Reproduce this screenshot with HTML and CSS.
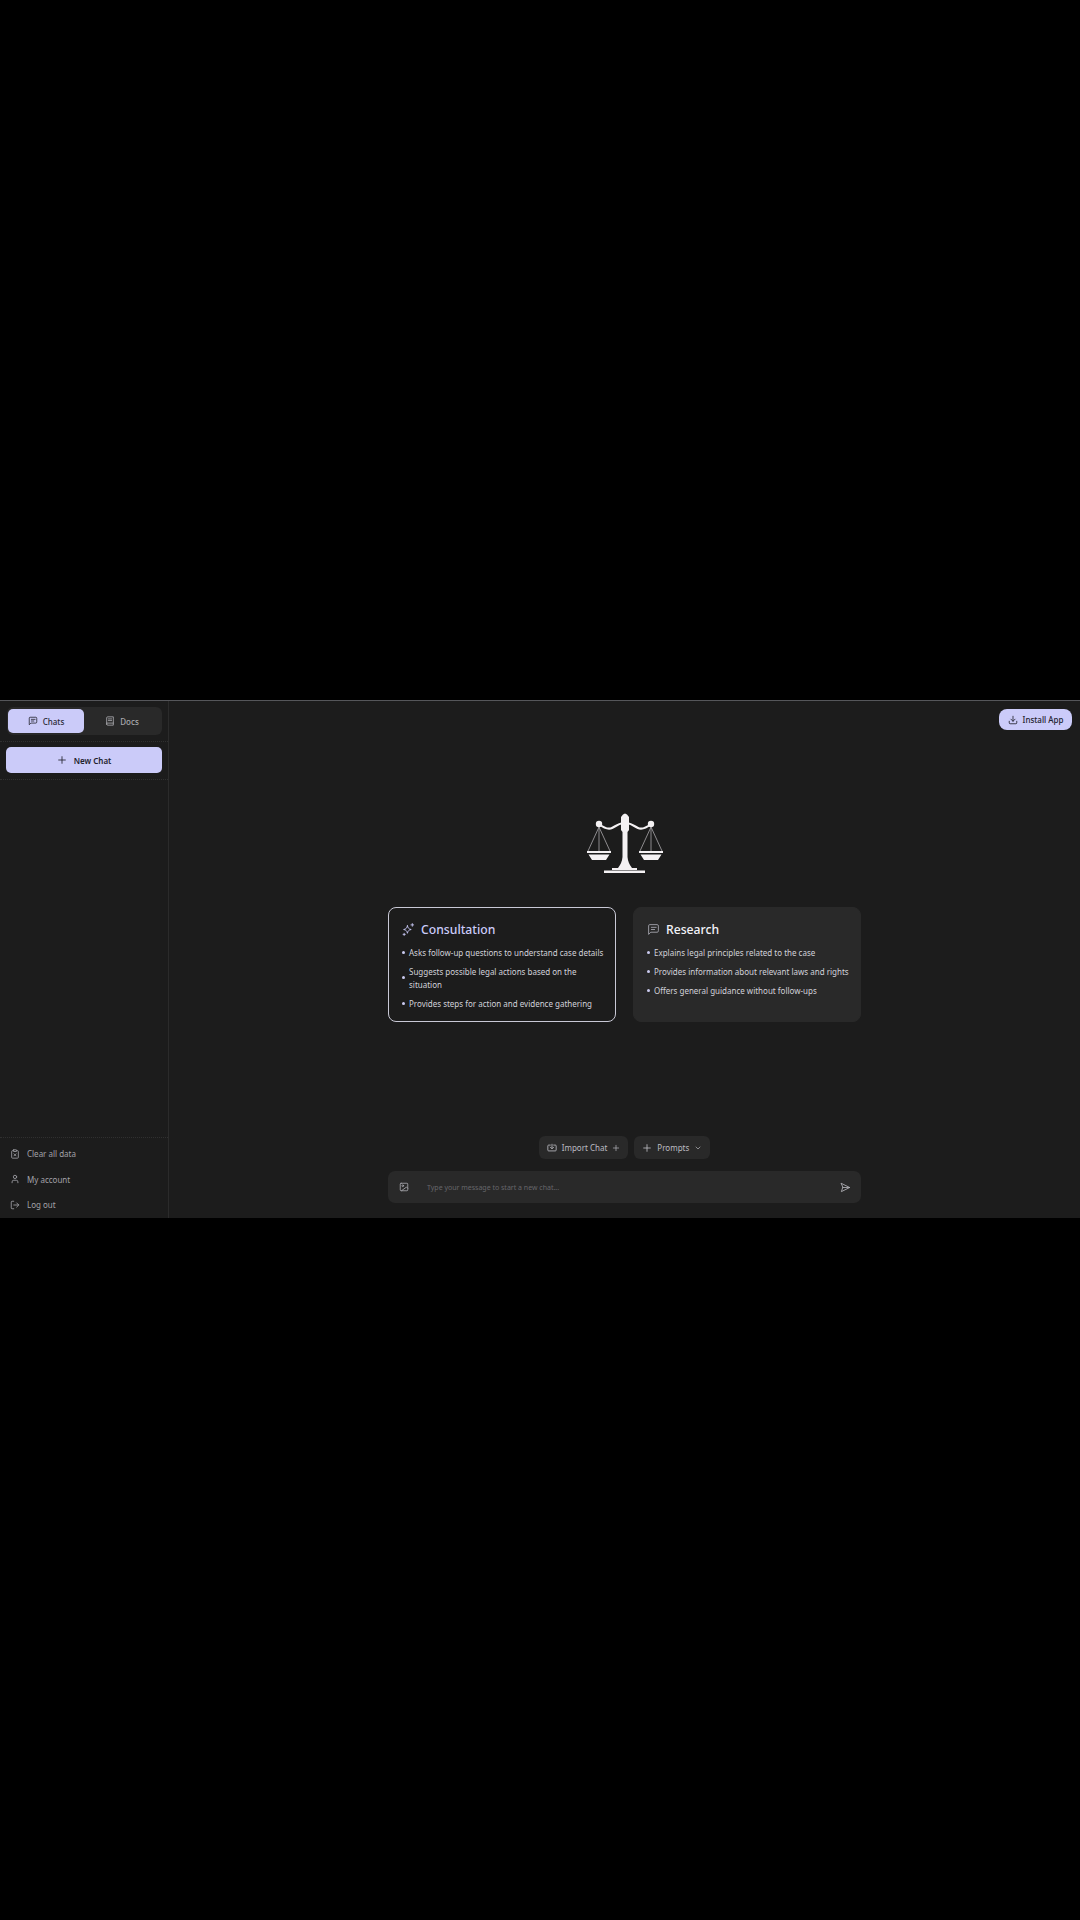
FILE: index.html
```html
<!DOCTYPE html>
<html>
<head>
    <title>Legal Assistant</title>
    <link rel="stylesheet" href="styles.css">
</head>
<body>
    <div class="app">
        <aside class="sidebar">
            <div class="tabs-wrap">
                <div class="tabs">
                    <div class="tab active">
                        <svg class="icon" viewBox="0 0 24 24"><path d="M21 15a2 2 0 0 1-2 2H7l-4 4V5a2 2 0 0 1 2-2h14a2 2 0 0 1 2 2z"/><path d="M8 8h9M8 12h6"/></svg>
                        <span>Chats</span>
                    </div>
                    <div class="tab">
                        <svg class="icon" viewBox="0 0 24 24"><path d="M4 19.5v-15A2.5 2.5 0 0 1 6.5 2H20v20H6.5a2.5 2.500 0 0 1-2.500-2.500z"/><path d="M4 17h16M8 7h8M8 11h8"/></svg>
                        <span>Docs</span>
                    </div>
                </div>
            </div>
            <div class="new-wrap">
                <button class="new-chat">
                    <svg class="icon" viewBox="0 0 24 24"><path d="M4 12h16M12 4v16"/></svg>
                    <span>New Chat</span>
                </button>
            </div>
            <div class="spacer"></div>
            <div class="side-foot">
                <div class="foot-row">
                    <svg class="icon" viewBox="0 0 24 24"><rect x="8" y="2" width="8" height="4" rx="1"/><path d="M16 4h2a2 2 0 0 1 2 2v14a2 2 0 0 1-2 2H6a2 2 0 0 1-2-2V6a2 2 0 0 1 2-2h2"/><path d="m9.5 11.5 5 5M14.5 11.5l-5 5"/></svg>
                    <span>Clear all data</span>
                </div>
                <div class="foot-row">
                    <svg class="icon" viewBox="0 0 24 24"><path d="M19 21v-2a4 4 0 0 0-4-4H9a4 4 0 0 0-4 4v2"/><circle cx="12" cy="7" r="4"/></svg>
                    <span>My account</span>
                </div>
                <div class="foot-row">
                    <svg class="icon" viewBox="0 0 24 24"><path d="M9 21H5a2 2 0 0 1-2-2V5a2 2 0 0 1 2-2h4"/><path d="m16 17 5-5-5-5M21 12H9"/></svg>
                    <span>Log out</span>
                </div>
            </div>
        </aside>

        <main class="main">
            <div class="top-bar">
                <button class="install">
                    <svg class="icon" viewBox="0 0 24 24"><path d="M21 15v4a2 2 0 0 1-2 2H5a2 2 0 0 1-2-2v-4"/><path d="m7 10 5 5 5-5M12 15V3"/></svg>
                    <span>Install App</span>
                </button>
            </div>

            <div class="logo">
                <svg viewBox="0 0 76 60" width="76" height="60">
                    <!-- beam -->
                    <path class="scale-beam" d="M12 11 C17 15 21 17 25 15 C29 13 31 11 36 10 M40 10 C45 11 47 13 51 15 C55 17 59 15 64 11"/>
                    <circle class="scale-fill" cx="12" cy="11" r="3.200"/>
                    <circle class="scale-fill" cx="64" cy="11" r="3.200"/>
                    <!-- pillar -->
                    <path class="scale-fill" d="M34 4 Q38 -3 42 4 L42 17 L40.500 19 L40.500 44 Q41 50 45 55 L31 55 Q35 50 35.500 44 L35.500 19 L34 17 Z"/>
                    <rect class="scale-fill" x="25" y="55" width="25" height="2"/>
                    <rect class="scale-fill" x="17" y="57.500" width="41" height="2.500"/>
                    <!-- pans -->
                    <path class="scale-line" d="M12 14 L1 38 M12 14 L23 38 M12 14 V38"/>
                    <path class="scale-line" d="M64 14 L53 38 M64 14 L75 38 M64 14 V38"/>
                    <path class="scale-fill" d="M0 38 H24 V40 H0 Z M1.500 41.500 H22.500 L19 47 H5 Z"/>
                    <path class="scale-fill" d="M52 38 H76 V40 H52 Z M53.500 41.500 H74.500 L71 47 H57 Z"/>
                </svg>
            </div>

            <div class="cards">
                <div class="card selected">
                    <div class="card-head">
                        <svg class="icon" viewBox="0 0 24 24"><path d="M10 5c.8 4.400 2.600 6.200 7 7-4.400.8-6.200 2.600-7 7-.8-4.400-2.600-6.200-7-7 4.400-.8 6.200-2.600 7-7z"/><path d="M19 1v5M16.500 3.500h5M4 19v4M2 21h4"/></svg>
                        <span>Consultation</span>
                    </div>
                    <ul class="points">
                        <li>Asks follow-up questions to understand case details</li>
                        <li>Suggests possible legal actions based on the situation</li>
                        <li>Provides steps for action and evidence gathering</li>
                    </ul>
                </div>
                <div class="card">
                    <div class="card-head">
                        <svg class="icon" viewBox="0 0 24 24"><path d="M21 15a2 2 0 0 1-2 2H7l-4 4V5a2 2 0 0 1 2-2h14a2 2 0 0 1 2 2z"/><path d="M8 8h9M8 12h6"/></svg>
                        <span>Research</span>
                    </div>
                    <ul class="points">
                        <li>Explains legal principles related to the case</li>
                        <li>Provides information about relevant laws and rights</li>
                        <li>Offers general guidance without follow-ups</li>
                    </ul>
                </div>
            </div>

            <div class="spacer"></div>

            <div class="actions">
                <button class="pill">
                    <svg class="icon" viewBox="0 0 24 24"><path d="M8 5H4a2 2 0 0 0-2 2v10a2 2 0 0 0 2 2h16a2 2 0 0 0 2-2V7a2 2 0 0 0-2-2h-4"/><path d="M12 3v10M8 10l4 4 4-4"/></svg>
                    <span>Import Chat</span>
                    <svg class="icon small" viewBox="0 0 24 24"><path d="M4 12h16M12 4v16"/></svg>
                </button>
                <button class="pill">
                    <svg class="icon" viewBox="0 0 24 24"><path d="M4 12h16M12 4v16"/></svg>
                    <span>Prompts</span>
                    <svg class="icon small" viewBox="0 0 24 24"><path d="m6 9 6 6 6-6"/></svg>
                </button>
            </div>

            <div class="input-bar">
                <svg class="icon" viewBox="0 0 24 24"><rect x="3" y="3" width="18" height="18" rx="2"/><circle cx="9" cy="9" r="2"/><path d="m21 15-3-3L6 21"/></svg>
                <span class="placeholder">Type your message to start a new chat...</span>
                <svg class="icon send" viewBox="0 0 24 24"><path d="M3 3l18 9-18 9 3-9z"/><path d="M6 12h15"/></svg>
            </div>
        </main>
    </div>
</body>
</html>
```

FILE: styles.css
```css
* {
    box-sizing: border-box;
}

body {
    margin: 0;
    height: 1920px;
    padding-top: 700px;
    background-color: #000;
    font-family: "Noto Sans", "Open Sans", sans-serif;
    color: #e4e4ea;
}

button {
    font-family: inherit;
    border: none;
    cursor: pointer;
}

.icon {
    width: 10px;
    height: 10px;
    flex: none;
    fill: none;
    stroke: currentColor;
    stroke-width: 2;
    stroke-linecap: round;
    stroke-linejoin: round;
}

.icon.small {
    width: 8px;
    height: 8px;
}

.spacer {
    flex: 1;
}

.app {
    display: flex;
    height: 518px;
    background-color: #1c1c1c;
    border-top: 1px solid #55565a;
}

/* sidebar */
.sidebar {
    display: flex;
    flex-direction: column;
    width: 169px;
    border-right: 1px solid #2b2b2b;
}

.tabs-wrap {
    height: 41px;
    padding: 6px 6px 0 7px;
    border-bottom: 1px dotted #303030;
}

.tabs {
    display: flex;
    height: 28px;
    padding: 2px 0 2px 1px;
    background-color: #292929;
    border-radius: 6px;
}

.tab {
    display: flex;
    align-items: center;
    justify-content: center;
    gap: 5px;
    width: 76px;
    font-size: 8px;
    font-weight: 500;
    color: #a9a9ae;
    border-radius: 5px;
}

.tab.active {
    background-color: #cbcbf9;
    color: #2a2a35;
}

.new-wrap {
    height: 38px;
    padding: 5px 6px 0;
    border-bottom: 1px dotted #303030;
}

.new-chat {
    display: flex;
    align-items: center;
    justify-content: center;
    gap: 7px;
    width: 156px;
    height: 26px;
    font-size: 8px;
    font-weight: 600;
    color: #22222c;
    background-color: #cbcbf9;
    border-radius: 5px;
}

.side-foot {
    height: 81px;
    padding-top: 3px;
    border-top: 1px dotted #303030;
}

.foot-row {
    display: flex;
    align-items: center;
    gap: 7px;
    height: 25.500px;
    padding-left: 10px;
    font-size: 8px;
    color: #a2a2a8;
}

/* main area */
.main {
    flex: 1;
    display: flex;
    flex-direction: column;
    align-items: center;
}

.top-bar {
    display: flex;
    justify-content: flex-end;
    width: 100%;
    height: 37px;
    padding: 8px 8px 0 0;
}

.install {
    display: flex;
    align-items: center;
    gap: 5px;
    height: 21px;
    padding: 0 8.500px;
    font-size: 8px;
    font-weight: 500;
    color: #22222c;
    background-color: #cbcbf9;
    border-radius: 8px;
}

.logo {
    height: 60px;
    margin-top: 75px;
}

.logo svg {
    display: block;
}

.scale-fill {
    fill: #f4f1f3;
}

.scale-beam {
    fill: none;
    stroke: #f4f1f3;
    stroke-width: 2.200;
    stroke-linecap: round;
}

.scale-line {
    fill: none;
    stroke: #a9a7ab;
    stroke-width: 0.800;
}

.cards {
    display: flex;
    gap: 17px;
    margin-top: 34px;
}

.card {
    width: 228px;
    height: 115px;
    padding: 11px 11px 0 13px;
    background-color: #292929;
    border: 1px solid #292929;
    border-radius: 8px;
}

.card.selected {
    background-color: #1c1c1c;
    border-color: #c9c9d6;
}

.card-head {
    display: flex;
    align-items: center;
    gap: 6px;
    height: 20px;
    font-size: 12.200px;
    font-weight: 500;
    color: #f2f2f8;
}

.card-head .icon {
    width: 13px;
    height: 13px;
    stroke-width: 1.600;
    color: #a9a9b2;
}

.card.selected .card-head {
    color: #cbcbf9;
}

.card.selected .card-head .icon {
    color: #cbcbf9;
}

.points {
    display: flex;
    flex-direction: column;
    gap: 6px;
    margin: 7px 0 0;
    padding: 0;
    list-style: none;
}

.points li {
    position: relative;
    padding-left: 7px;
    font-size: 8px;
    line-height: 13px;
    color: #d2d2da;
}

.points li::before {
    content: "";
    position: absolute;
    left: 0;
    top: 50%;
    width: 3px;
    height: 3px;
    margin-top: -2px;
    border-radius: 50%;
    background-color: #cbcbf0;
}

.actions {
    display: flex;
    gap: 6px;
}

.pill {
    display: flex;
    align-items: center;
    gap: 5px;
    height: 23px;
    padding: 0 8px;
    font-size: 8px;
    color: #bcbcc2;
    background-color: #292929;
    border-radius: 6px;
}

.input-bar {
    display: flex;
    align-items: center;
    width: 473px;
    height: 32px;
    margin-top: 12px;
    margin-bottom: 15px;
    padding: 0 10px 0 11px;
    background-color: #292929;
    border-radius: 7px;
    color: #a8a8ae;
}

.input-bar .send {
    width: 11px;
    height: 11px;
}

.placeholder {
    flex: 1;
    padding-left: 18px;
    font-size: 7px;
    color: #66666a;
}
```
